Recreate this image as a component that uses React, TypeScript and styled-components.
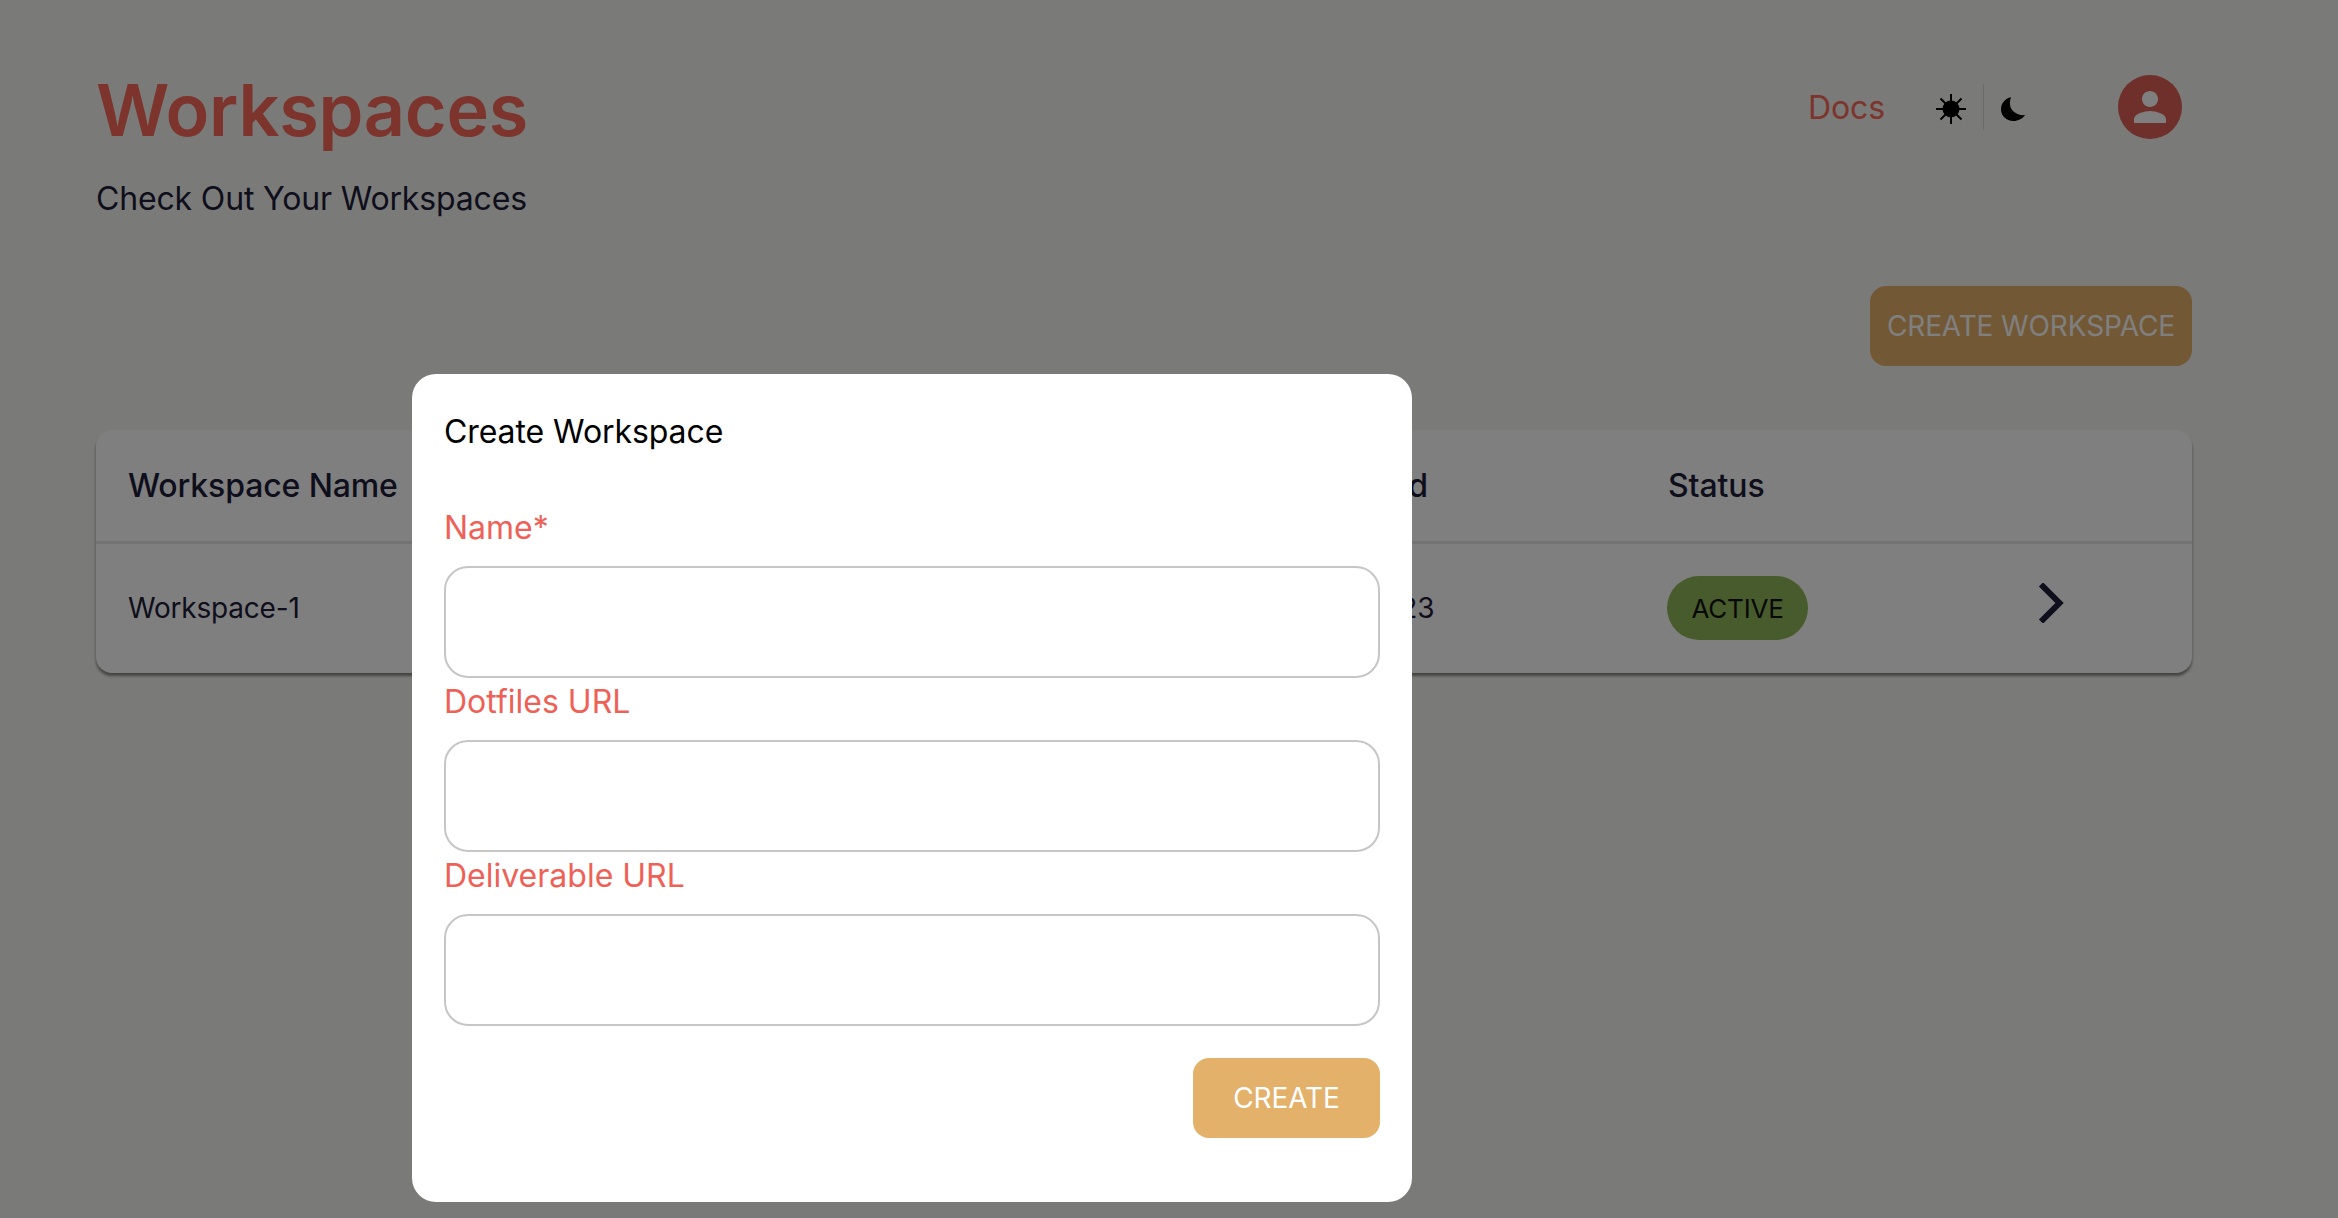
import styled, { createGlobalStyle } from "styled-components";

const GlobalStyle = createGlobalStyle`
  html, body {
    margin: 0;
    padding: 0;
    background: #f5f5f1;
    font-family: "Inter", "Liberation Sans", sans-serif;
    overflow: hidden;
  }
  * { box-sizing: border-box; }
`;

const Page = styled.div`
  height: 1218px;
  padding: 67px 146px 0 96px;
  color: #1c1c38;
`;

const Header = styled.header`
  display: flex;
  justify-content: space-between;
  align-items: flex-start;
`;

const Title = styled.h1`
  margin: 0;
  font-size: 72px;
  line-height: 86px;
  font-weight: 600;
  letter-spacing: -0.3px;
  color: #f8685a;
`;

const Subtitle = styled.p`
  margin: 24px 0 0;
  font-size: 32px;
  line-height: 44px;
  letter-spacing: -0.16px;
`;

const Nav = styled.nav`
  display: flex;
  align-items: center;
  height: 80px;
  margin-right: 10px;
`;

const DocsLink = styled.a`
  font-size: 32px;
  letter-spacing: -0.1px;
  color: #f8685a;
  margin-right: 51px;
`;

const ThemeToggle = styled.div`
  display: flex;
  align-items: center;
  gap: 17px;
  margin-right: 92px;

  svg {
    margin-top: 4px;
  }
`;

const ToggleDivider = styled.span`
  width: 1px;
  height: 46px;
  margin-right: -1px;
  background: rgba(0, 0, 0, 0.12);
`;

const Avatar = styled.div`
  width: 64px;
  height: 64px;
  border-radius: 50%;
  background: #df5e54;
  display: flex;
  align-items: center;
  justify-content: center;
`;

const Toolbar = styled.div`
  display: flex;
  justify-content: flex-end;
  margin-top: 65px;
`;

const PrimaryButton = styled.button`
  height: 80px;
  padding: 0 17px;
  border: none;
  border-radius: 16px;
  background: #e4b16b;
  color: #fff;
  font-family: inherit;
  font-size: 28px;
  font-weight: 400;
  letter-spacing: -0.12px;
`;

const Card = styled.section`
  margin-top: 64px;
  background: #fff;
  border-radius: 16px;
  box-shadow: 0 3px 3px rgba(0, 0, 0, 0.45);
  overflow: hidden;
`;

const Row = styled.div<{ $head?: boolean }>`
  display: grid;
  grid-template-columns: 1179px 361px 371px 1fr;
  align-items: center;
  padding-left: 32px;
  height: ${(p) => (p.$head ? "114px" : "129px")};
  font-size: ${(p) => (p.$head ? "32px" : "28px")};
  font-weight: ${(p) => (p.$head ? 500 : 400)};
  letter-spacing: ${(p) => (p.$head ? "-0.12px" : "-0.2px")};
  border-bottom: ${(p) => (p.$head ? "3px solid #e6e6e6" : "none")};
`;

const RowCell = styled.span`
  margin-top: -1px;
`;

const StatusBadge = styled.span`
  display: inline-flex;
  align-items: center;
  justify-content: center;
  width: 141px;
  height: 64px;
  margin-left: -1px;
  border-radius: 32px;
  background: #90b658;
  color: #111;
  font-size: 26px;
`;

const RowAction = styled.span`
  display: flex;
  margin: -12px 0 0 -1px;
`;

const Overlay = styled.div`
  position: fixed;
  inset: 0;
  background: rgba(0, 0, 0, 0.5);
  padding: 374px 0 0 412px;
`;

const Dialog = styled.form`
  width: 1000px;
  height: 828px;
  padding: 32px;
  background: #fff;
  border-radius: 24px;
`;

const DialogTitle = styled.h2`
  margin: 0 0 47px;
  font-size: 32px;
  line-height: 51px;
  font-weight: 400;
  letter-spacing: -0.08px;
  color: #000;
`;

const Field = styled.label`
  display: block;
`;

const FieldLabel = styled.span`
  display: block;
  font-size: 32px;
  line-height: 48px;
  height: 62px;
  color: #ee6157;
`;

const TextInput = styled.input`
  display: block;
  width: 100%;
  height: 112px;
  border: 2px solid #c6c6c6;
  border-radius: 24px;
  background: #fff;
  outline: none;
`;

const DialogActions = styled.div`
  display: flex;
  justify-content: flex-end;
  margin-top: 32px;
`;

const SubmitButton = styled(PrimaryButton)`
  width: 187px;
`;

const SunIcon = () => (
  <svg width="30" height="30" viewBox="0 0 30 30" fill="none">
    <circle cx="15" cy="15" r="8.5" fill="#000" />
    <path
      d="M15 0V30M0 15H30M4.5 4.5L25.5 25.5M25.5 4.5L4.5 25.5"
      stroke="#000"
      strokeWidth="2"
    />
  </svg>
);

const MoonIcon = () => (
  <svg width="26" height="26" viewBox="0 0 26 26" fill="#000">
    <path d="M11 1.3C5 2.5 1 7.5 1 13.3C1 20 6.5 25 13.3 25C18.3 25 22.8 22.5 25 19C17.5 20 10.5 15 10 8.5C9.8 6 10.2 3.5 11 1.3Z" />
  </svg>
);

const PersonIcon = () => (
  <svg width="48" height="48" viewBox="0 0 24 24" fill="#fff">
    <path d="M12 12c2.21 0 4-1.79 4-4s-1.79-4-4-4-4 1.79-4 4 1.79 4 4 4zm0 2c-2.67 0-8 1.34-8 4v2h16v-2c0-2.66-5.33-4-8-4z" />
  </svg>
);

const ChevronIcon = () => (
  <svg width="26" height="40" viewBox="0 0 26 40" fill="none">
    <path d="M3 1.5L21.5 20L3 38.5" stroke="#1c1c38" strokeWidth="6" />
  </svg>
);

const fields = ["Name*", "Dotfiles URL", "Deliverable URL"];

export default function App() {
  return (
    <>
      <GlobalStyle />
      <Page>
        <Header>
          <div>
            <Title>Workspaces</Title>
            <Subtitle>Check Out Your Workspaces</Subtitle>
          </div>
          <Nav>
            <DocsLink>Docs</DocsLink>
            <ThemeToggle>
              <SunIcon />
              <ToggleDivider />
              <MoonIcon />
            </ThemeToggle>
            <Avatar>
              <PersonIcon />
            </Avatar>
          </Nav>
        </Header>
        <Toolbar>
          <PrimaryButton>CREATE WORKSPACE</PrimaryButton>
        </Toolbar>
        <Card>
          <Row $head>
            <span>Workspace Name</span>
            <span>Created</span>
            <span>Status</span>
            <span />
          </Row>
          <Row>
            <RowCell>Workspace-1</RowCell>
            <RowCell>1/12/2023</RowCell>
            <RowCell>
              <StatusBadge>ACTIVE</StatusBadge>
            </RowCell>
            <RowAction>
              <ChevronIcon />
            </RowAction>
          </Row>
        </Card>
      </Page>
      <Overlay>
        <Dialog>
          <DialogTitle>Create Workspace</DialogTitle>
          {fields.map((label) => (
            <Field key={label}>
              <FieldLabel>{label}</FieldLabel>
              <TextInput />
            </Field>
          ))}
          <DialogActions>
            <SubmitButton type="button">CREATE</SubmitButton>
          </DialogActions>
        </Dialog>
      </Overlay>
    </>
  );
}
